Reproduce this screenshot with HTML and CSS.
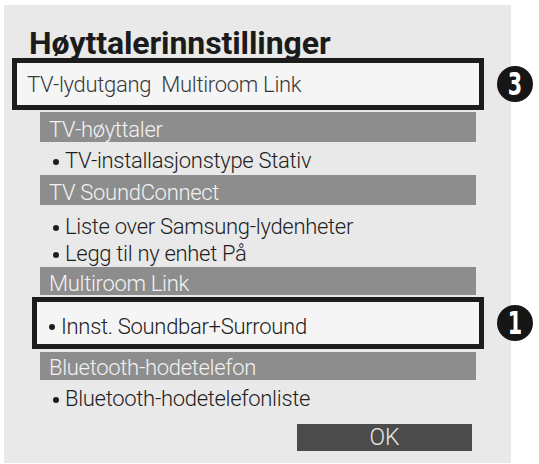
FILE: index.html
```html
<!DOCTYPE html>
<html lang="no">
<head>
<meta charset="utf-8">
<title>Høyttalerinnstillinger</title>
<link rel="stylesheet" href="styles.css">
</head>
<body>
<main class="dialog">
  <h1 class="title">Høyttalerinnstillinger</h1>

  <div class="callout callout-output">
    <div class="focus-box focus-output">
      <span class="focus-text">TV-lydutgang  Multiroom Link</span>
    </div>
    <span class="marker"><span class="marker-digit">3</span></span>
  </div>

  <div class="section-bar bar-speaker">TV-høyttaler</div>
  <div class="item item-first"><span class="dot"></span>TV-installasjonstype Stativ</div>

  <div class="section-bar bar-connect">TV SoundConnect</div>
  <div class="item item-list"><span class="dot"></span>Liste over Samsung-lydenheter</div>
  <div class="item"><span class="dot"></span>Legg til ny enhet På</div>

  <div class="section-bar bar-multiroom">Multiroom Link</div>
  <div class="callout callout-surround">
    <div class="focus-box focus-surround">
      <span class="dot"></span><span class="focus-item">Innst. Soundbar+Surround</span>
    </div>
    <span class="marker"><span class="marker-digit">1</span></span>
  </div>

  <div class="section-bar bar-bluetooth">Bluetooth-hodetelefon</div>
  <div class="item item-first"><span class="dot"></span>Bluetooth-hodetelefonliste</div>

  <div class="actions">
    <button class="ok-button" type="button">OK</button>
  </div>
</main>
</body>
</html>
```
FILE: styles.css
```css
html, body {
  margin: 0;
  padding: 0;
  background: #ffffff;
}

body {
  font-family: Roboto, "Open Sans", sans-serif;
  font-weight: 300;
  color: #222222;
}

/* Settings panel */
.dialog {
  box-sizing: border-box;
  margin: 5px 0 0 4px;
  width: 507px;
  height: 458px;
  padding: 24px 0 0 0;
  background: #e9e9e9;
  display: flex;
  flex-direction: column;
}

.title {
  margin: 0 0 0 25px;
  font-size: 32px;
  font-weight: 700;
  line-height: 29px;
  color: #1b1b1b;
  letter-spacing: -0.1px;
}

/* Highlighted rows with a numbered marker beside them */
.callout {
  display: flex;
  align-items: center;
  gap: 13px;
}

.callout-output {
  margin: 0 0 0 8px;
}

.callout-surround {
  margin: 2px 0 0 28px;
}

.focus-box {
  box-sizing: border-box;
  height: 52px;
  border: 5px solid #1c1c1c;
  background: #f5f5f5;
  flex: none;
}

.focus-output {
  width: 472px;
  padding: 2px 0 0 10px;
}

.focus-surround {
  width: 452px;
  padding: 5px 0 0 12px;
  display: flex;
  align-items: flex-start;
}

.focus-text,
.focus-item {
  font-size: 22px;
  line-height: 40px;
  letter-spacing: -0.3px;
  white-space: pre;
  color: #3a3a3a;
}

.focus-item {
  color: #222222;
}

.focus-surround .dot {
  margin-top: 17px;
}

.marker {
  flex: none;
  width: 36px;
  height: 36px;
  border-radius: 50%;
  background: #161616;
  color: #ffffff;
  display: flex;
  align-items: center;
  justify-content: center;
}

.marker-digit {
  display: block;
  font-family: "DejaVu Sans Condensed", "DejaVu Sans", sans-serif;
  font-weight: 700;
  font-size: 32px;
  line-height: 1;
  transform: scaleX(0.72);
}

/* Grey section headings */
.section-bar {
  box-sizing: border-box;
  margin-left: 36px;
  width: 436px;
  height: 30px;
  padding: 3px 0 0 9px;
  background: #8d8d8d;
  color: #f2f2f2;
  font-size: 22px;
  line-height: 30px;
  letter-spacing: -0.3px;
  white-space: nowrap;
}

.bar-speaker {
  margin-top: 2px;
}

.bar-connect {
  margin-top: 1px;
}

.bar-bluetooth {
  margin-top: 3px;
  height: 28px;
  padding-top: 1px;
}

.bar-multiroom {
  height: 28px;
  padding-top: 2px;
}

/* Bulleted option rows */
.item {
  margin-left: 36px;
  padding-left: 13px;
  font-size: 22px;
  line-height: 27px;
  letter-spacing: -0.3px;
  color: #1e1e1e;
  display: flex;
  align-items: flex-start;
  white-space: nowrap;
}

.item-first {
  margin-top: 5px;
}

.item-list {
  margin-top: 8px;
}

.dot {
  flex: none;
  width: 6px;
  height: 6px;
  margin: 12px 6px 0 0;
  border-radius: 50%;
  background: #1e1e1e;
}

/* Confirm button */
.actions {
  display: flex;
  justify-content: flex-end;
  margin-top: 12px;
  padding-right: 39px;
}

.ok-button {
  width: 175px;
  height: 27px;
  border: none;
  padding: 0;
  background: #4b4b4b;
  color: #e6e6e6;
  font-family: Roboto, sans-serif;
  font-weight: 300;
  font-size: 23px;
  line-height: 27px;
}
```
